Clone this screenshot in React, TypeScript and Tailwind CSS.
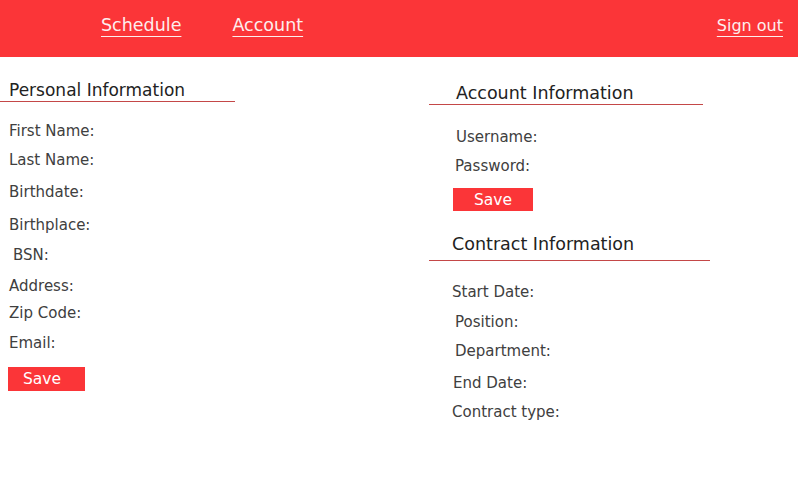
import React from "react";

const font = { fontFamily: '"DejaVu Sans", "Liberation Sans", sans-serif' };

function Label({ text, mt, pl }: { text: string; mt: string; pl: string }) {
  return (
    <div className={`h-5 leading-[22px] text-[15px] text-[#404040] ${mt} ${pl}`}>{text}</div>
  );
}

export default function App() {
  return (
    <div className="w-[798px] h-[494px] bg-white overflow-hidden" style={font}>
      <header className="h-[57px] pb-[6px] bg-[#fb3538] flex items-center text-[17.5px] text-[#fdeeee]">
        <a className="ml-[101px] underline underline-offset-[5px] decoration-1">Schedule</a>
        <a className="ml-[51px] underline underline-offset-[5px] decoration-1">Account</a>
        <a className="ml-auto mr-[15px] text-[16px] underline underline-offset-[5px] decoration-1">Sign out</a>
      </header>
      <div className="flex">
        <div className="w-[429px] flex flex-col items-start">
          <div className="mt-[21px] w-[235px] h-[24px] leading-[25px] pl-[9px] text-[17px] text-[#222] border-b border-[#c44848]">
            Personal Information
          </div>
          <Label text="First Name:" mt="mt-[18px]" pl="pl-[9px]" />
          <Label text="Last Name:" mt="mt-[9px]" pl="pl-[9px]" />
          <Label text="Birthdate:" mt="mt-[12px]" pl="pl-[9px]" />
          <Label text="Birthplace:" mt="mt-[13px]" pl="pl-[9px]" />
          <Label text="BSN:" mt="mt-[10px]" pl="pl-[13px]" />
          <Label text="Address:" mt="mt-[11px]" pl="pl-[9px]" />
          <Label text="Zip Code:" mt="mt-[7px]" pl="pl-[9px]" />
          <Label text="Email:" mt="mt-[10px]" pl="pl-[9px]" />
          <button className="mt-[15px] ml-[8px] w-[77px] h-[24px] bg-[#fb3538] text-white text-[15.5px] text-left pl-[15px] leading-[24px]">
            Save
          </button>
        </div>
        <div className="flex-1 flex flex-col items-start">
          <div className="mt-[24px] w-[274px] h-[24px] leading-[25px] pl-[27px] text-[17.5px] text-[#222] border-b border-[#c44848]">
            Account Information
          </div>
          <Label text="Username:" mt="mt-[21px]" pl="pl-[27px]" />
          <Label text="Password:" mt="mt-[9px]" pl="pl-[26px]" />
          <button className="mt-[13px] ml-[24px] w-[80px] h-[23px] bg-[#fb3538] text-white text-[15.5px] text-left pl-[21px] leading-[24px]">
            Save
          </button>
          <div className="mt-[21px] w-[281px] h-[29px] leading-[25px] pb-[5px] pl-[23px] text-[17.5px] text-[#222] border-b border-[#c44848]">
            Contract Information
          </div>
          <Label text="Start Date:" mt="mt-[20px]" pl="pl-[23px]" />
          <Label text="Position:" mt="mt-[10px]" pl="pl-[26px]" />
          <Label text="Department:" mt="mt-[9px]" pl="pl-[26px]" />
          <Label text="End Date:" mt="mt-[12px]" pl="pl-[24px]" />
          <Label text="Contract type:" mt="mt-[9px]" pl="pl-[23px]" />
        </div>
      </div>
    </div>
  );
}
